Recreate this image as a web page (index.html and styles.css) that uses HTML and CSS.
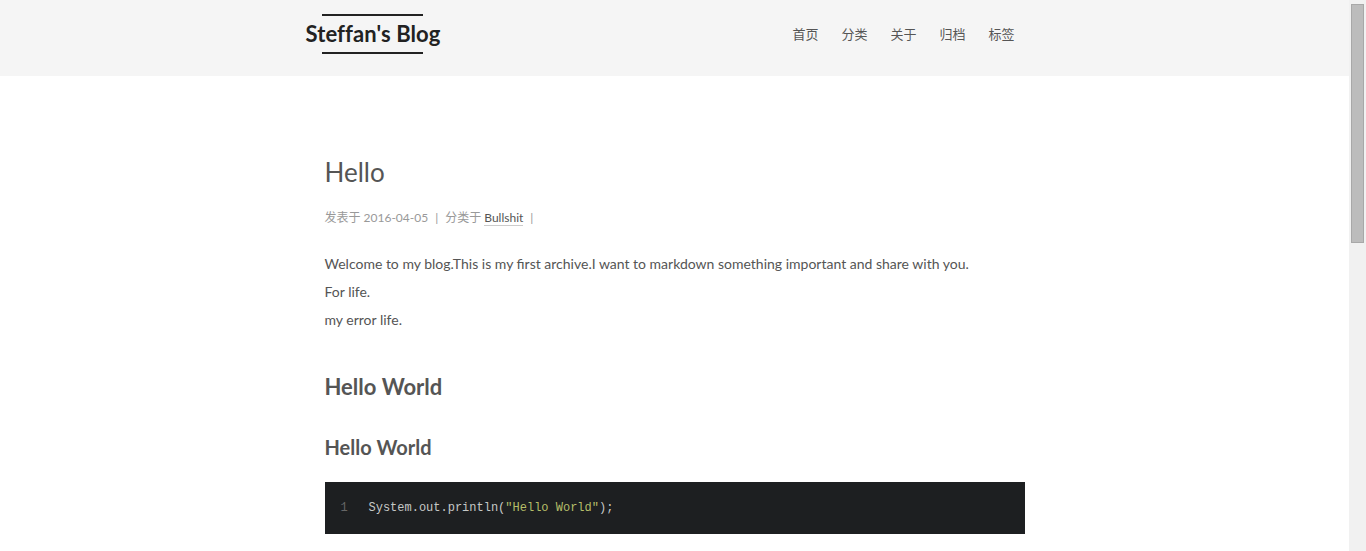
FILE: index.html
```html
<!DOCTYPE html>
<html lang="zh-CN">
<head>
<meta charset="utf-8">
<title>Hello | Steffan's Blog</title>
<link rel="stylesheet" href="styles.css">
</head>
<body>
<header class="header">
  <div class="header-inner">
    <a class="brand" href="#">
      <span class="logo-line"></span>
      <span class="site-title">Steffan's Blog</span>
      <span class="logo-line"></span>
    </a>
    <nav class="menu">
      <a href="#">首页</a>
      <a href="#">分类</a>
      <a href="#">关于</a>
      <a href="#">归档</a>
      <a href="#">标签</a>
    </nav>
  </div>
</header>
<main class="main">
  <article class="post">
    <h1 class="post-title">Hello</h1>
    <div class="post-meta">
      <span>发表于 2016-04-05</span>
      <span class="sep">|</span>
      <span>分类于 <a class="cat" href="#">Bullshit</a></span>
      <span class="sep">|</span>
    </div>
    <div class="post-body">
      <p>Welcome to my blog.This is my first archive.I want to markdown something important and share with you.</p>
      <p>For life.</p>
      <p>my error life.</p>
      <h2>Hello World</h2>
      <h3>Hello World</h3>
      <figure class="highlight">
        <span class="gutter">1</span>
        <code class="code">System.out.println(<span class="string">"Hello World"</span>);</code>
      </figure>
    </div>
  </article>
</main>
<div class="scrollbar"><div class="scrollbar-thumb"></div></div>
</body>
</html>
```
FILE: styles.css
```css
html, body {
  margin: 0;
  padding: 0;
}
html {
  overflow: hidden;
}
body {
  font-family: Lato, "Noto Sans CJK SC", sans-serif;
  color: #555;
  background: #fff;
  margin-right: 17px;
  min-height: 1275px;
}
a {
  color: inherit;
  text-decoration: none;
}
.header {
  background: #f5f5f5;
}
.header-inner {
  width: 740px;
  margin: 0 auto;
  display: flex;
  justify-content: space-between;
  align-items: center;
  box-sizing: border-box;
  padding-left: 1px;
  padding-right: 30px;
  height: 76px;
}
.brand {
  display: flex;
  flex-direction: column;
  align-items: center;
  padding-top: 14px;
  padding-bottom: 22px;
  color: #222;
}
.logo-line {
  display: block;
  width: 101px;
  height: 2px;
  background: #222;
}
.site-title {
  font-family: Lato, sans-serif;
  font-weight: bold;
  font-size: 22px;
  line-height: 30px;
  margin-top: 3px;
  margin-bottom: 3px;
  letter-spacing: 0.1px;
}
.menu {
  display: flex;
  gap: 23px;
  font-size: 13px;
  font-family: Lato, "Noto Sans CJK SC", sans-serif;
  color: #555;
  padding-bottom: 10px;
}
.main {
  width: 700px;
  margin: 0 auto;
  padding-top: 78px;
}
.post-title {
  margin: 0;
  font-size: 26px;
  font-weight: normal;
  line-height: 36px;
  color: #555;
}
.post-meta {
  margin-top: 18px;
  font-size: 12px;
  line-height: 20px;
  color: #999;
  display: flex;
  gap: 7px;
}
.cat {
  color: #555;
  border-bottom: 1px solid #ccc;
}
.post-body {
  margin-top: 22px;
  font-size: 14px;
}
.post-body p {
  margin: 0;
  line-height: 28px;
}
.post-body h2 {
  margin: 38px 0 0;
  font-size: 22px;
  font-weight: bold;
  line-height: 30px;
}
.post-body h3 {
  margin: 31px 0 0;
  font-size: 20px;
  font-weight: bold;
  line-height: 28px;
}
.highlight {
  margin: 21px 0 0;
  background: #1d1f21;
  padding: 16px 0;
  display: flex;
  font-family: "Liberation Mono", monospace;
  font-size: 12px;
  line-height: 20px;
}
.gutter {
  width: 28px;
  padding-left: 16px;
  color: #666;
}
.code {
  font-family: inherit;
  color: #c5c8c6;
}
.string {
  color: #b5bd68;
}
.scrollbar {
  position: fixed;
  top: 0;
  right: 0;
  width: 17px;
  height: 100%;
  background: #f1f1f1;
}
.scrollbar-thumb {
  position: absolute;
  top: 4px;
  left: 2px;
  width: 11px;
  height: 237px;
  background: #bcbcbc;
  border: 1px solid #a8a8a8;
}
```
